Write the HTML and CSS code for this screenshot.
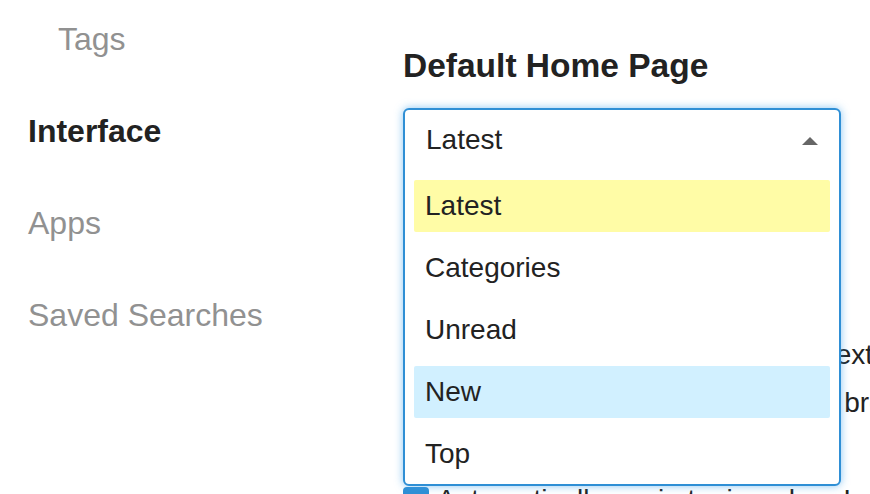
FILE: index.html
```html
<!DOCTYPE html>
<html lang="en">
<head>
  <meta charset="UTF-8">
  <meta name="viewport" content="width=device-width, initial-scale=1.0">
  <title>Preferences - Interface</title>
  <link rel="stylesheet" href="styles.css">
</head>
<body>
  <div class="page">
    <ul class="nav">
      <li class="sub">Tags</li>
      <li class="active">Interface</li>
      <li>Apps</li>
      <li>Saved Searches</li>
    </ul>

    <div class="main">
      <h3>Default Home Page</h3>
      <div class="field">
        <!-- open dropdown lies over the rest of the form -->
        <div class="combo">
          <div class="combo-head">
            <span>Latest</span>
            <span class="arrow"></span>
          </div>
          <ul class="options">
            <li class="selected">Latest</li>
            <li>Categories</li>
            <li>Unread</li>
            <li class="hover">New</li>
            <li>Top</li>
          </ul>
        </div>
      </div>

      <div class="prefs">
        <div class="line first">Enable quote reply for highlighted text</div>
        <div class="line">Show incoming message count on browser icon</div>
        <label class="check">
          <span class="box">&#10003;</span>
          Automatically unpin topics when I reach the bottom.
        </label>
      </div>
    </div>
  </div>
</body>
</html>
```

FILE: styles.css
```css
body {
  margin: 0;
  font-family: "Liberation Sans", Arial, sans-serif;
  color: #222;
  background: #fff;
  overflow: hidden;
}
.page {
  display: flex;
  width: 870px;
  height: 494px;
  overflow: hidden;
}
.nav {
  list-style: none;
  margin: 0;
  padding: 19px 0 0 28px;
  width: 375px;
  flex-shrink: 0;
  display: flex;
  flex-direction: column;
  gap: 52px;
}
.nav li {
  font-size: 32px;
  line-height: 40px;
  color: #919191;
  white-space: nowrap;
}
.nav li.sub {
  padding-left: 30px;
}
.nav li.active {
  color: #222;
  font-weight: bold;
}
.main {
  flex: 1;
  min-width: 0;
}
h3 {
  margin: 46px 0 22px;
  font-size: 33.5px;
  line-height: 40px;
  font-weight: bold;
  white-space: nowrap;
}
.field {
  position: relative;
  height: 62px;
  width: 438px;
}
.combo {
  position: absolute;
  top: 0;
  left: 0;
  z-index: 2;
  width: 438px;
  box-sizing: border-box;
  border: 2px solid #2f8fd5;
  border-radius: 6px;
  background: #fff;
  box-shadow: 0 0 8px rgba(60, 160, 235, 0.6);
}
.combo-head {
  display: flex;
  justify-content: space-between;
  align-items: center;
  height: 60px;
  padding: 0 21px;
  font-size: 28px;
}
.combo-head span:first-child {
  margin-top: -1px;
}
.arrow {
  width: 0;
  height: 0;
  margin-top: 2px;
  border-left: 8px solid transparent;
  border-right: 8px solid transparent;
  border-bottom: 8px solid #666;
}
.options {
  list-style: none;
  margin: 10px 9px 4px;
  padding: 0;
  display: flex;
  flex-direction: column;
  gap: 10px;
}
.options li {
  height: 52px;
  line-height: 52px;
  padding-left: 11px;
  font-size: 28px;
  border-radius: 2px;
}
.options li.selected {
  background: #fffca6;
}
.options li.hover {
  background: #d1f0ff;
}
.prefs {
  margin-top: 161px;
  font-size: 28px;
  white-space: nowrap;
}
.line {
  line-height: 48px;
  padding-left: 7px;
}
.line.first {
  padding-left: 0;
}
.check {
  display: flex;
  align-items: center;
  gap: 8px;
  margin-top: 49px;
  line-height: 48px;
}
.check .box {
  width: 26px;
  height: 26px;
  border-radius: 4px;
  background: #2f8fd5;
  color: #fff;
  font-size: 20px;
  line-height: 26px;
  text-align: center;
  flex-shrink: 0;
}
```
